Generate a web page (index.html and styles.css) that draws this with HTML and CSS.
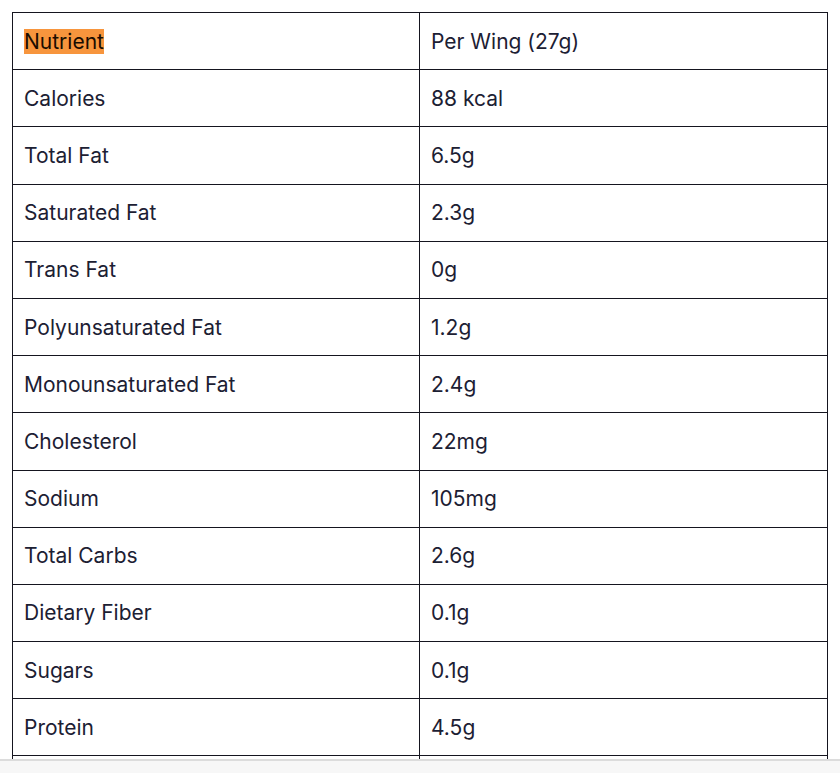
FILE: index.html
```html
<!DOCTYPE html>
<html>
<head>
<meta charset="utf-8">
<link rel="stylesheet" href="styles.css">
</head>
<body>
<div class="viewport">
  <div class="scroller">
    <table class="nutrition">
      <tbody>
        <tr><td><mark class="hl">Nutrient</mark></td><td>Per Wing (27g)</td></tr>
        <tr><td>Calories</td><td>88 kcal</td></tr>
        <tr><td>Total Fat</td><td>6.5g</td></tr>
        <tr><td>Saturated Fat</td><td>2.3g</td></tr>
        <tr><td>Trans Fat</td><td>0g</td></tr>
        <tr><td>Polyunsaturated Fat</td><td>1.2g</td></tr>
        <tr><td>Monounsaturated Fat</td><td>2.4g</td></tr>
        <tr><td>Cholesterol</td><td>22mg</td></tr>
        <tr><td>Sodium</td><td>105mg</td></tr>
        <tr><td>Total Carbs</td><td>2.6g</td></tr>
        <tr><td>Dietary Fiber</td><td>0.1g</td></tr>
        <tr><td>Sugars</td><td>0.1g</td></tr>
        <tr><td>Protein</td><td>4.5g</td></tr>
        <tr><td>&nbsp;</td><td>&nbsp;</td></tr>
      </tbody>
    </table>
  </div>
  <div class="scrollbar"></div>
</div>
</body>
</html>
```

FILE: styles.css
```css
html, body {
  margin: 0;
  padding: 0;
  background: #ffffff;
}
.viewport {
  width: 840px;
  height: 773px;
  overflow: hidden;
  display: flex;
  flex-direction: column;
}
.scroller {
  height: 759px;
  overflow: hidden;
  padding: 12px 0 0 12px;
  box-sizing: border-box;
  flex: none;
}
.scrollbar {
  flex: 1;
  border-top: 2px solid #dcdcdc;
  background: #f7f7f7;
}
.nutrition {
  width: 816px;
  border-collapse: collapse;
  table-layout: fixed;
  font-family: Inter, "Liberation Sans", sans-serif;
  font-size: 21px;
  color: #1c2033;
}
.nutrition td {
  border: 1px solid #15151f;
  padding: 15.6px 12px 15.6px 11px;
  line-height: 25px;
  height: 25px;
  vertical-align: middle;
  white-space: nowrap;
}
.nutrition td:first-child {
  width: 383px;
}
.hl {
  background: #f7953d;
  color: #1a0c00;
  padding: 0;
}
```
